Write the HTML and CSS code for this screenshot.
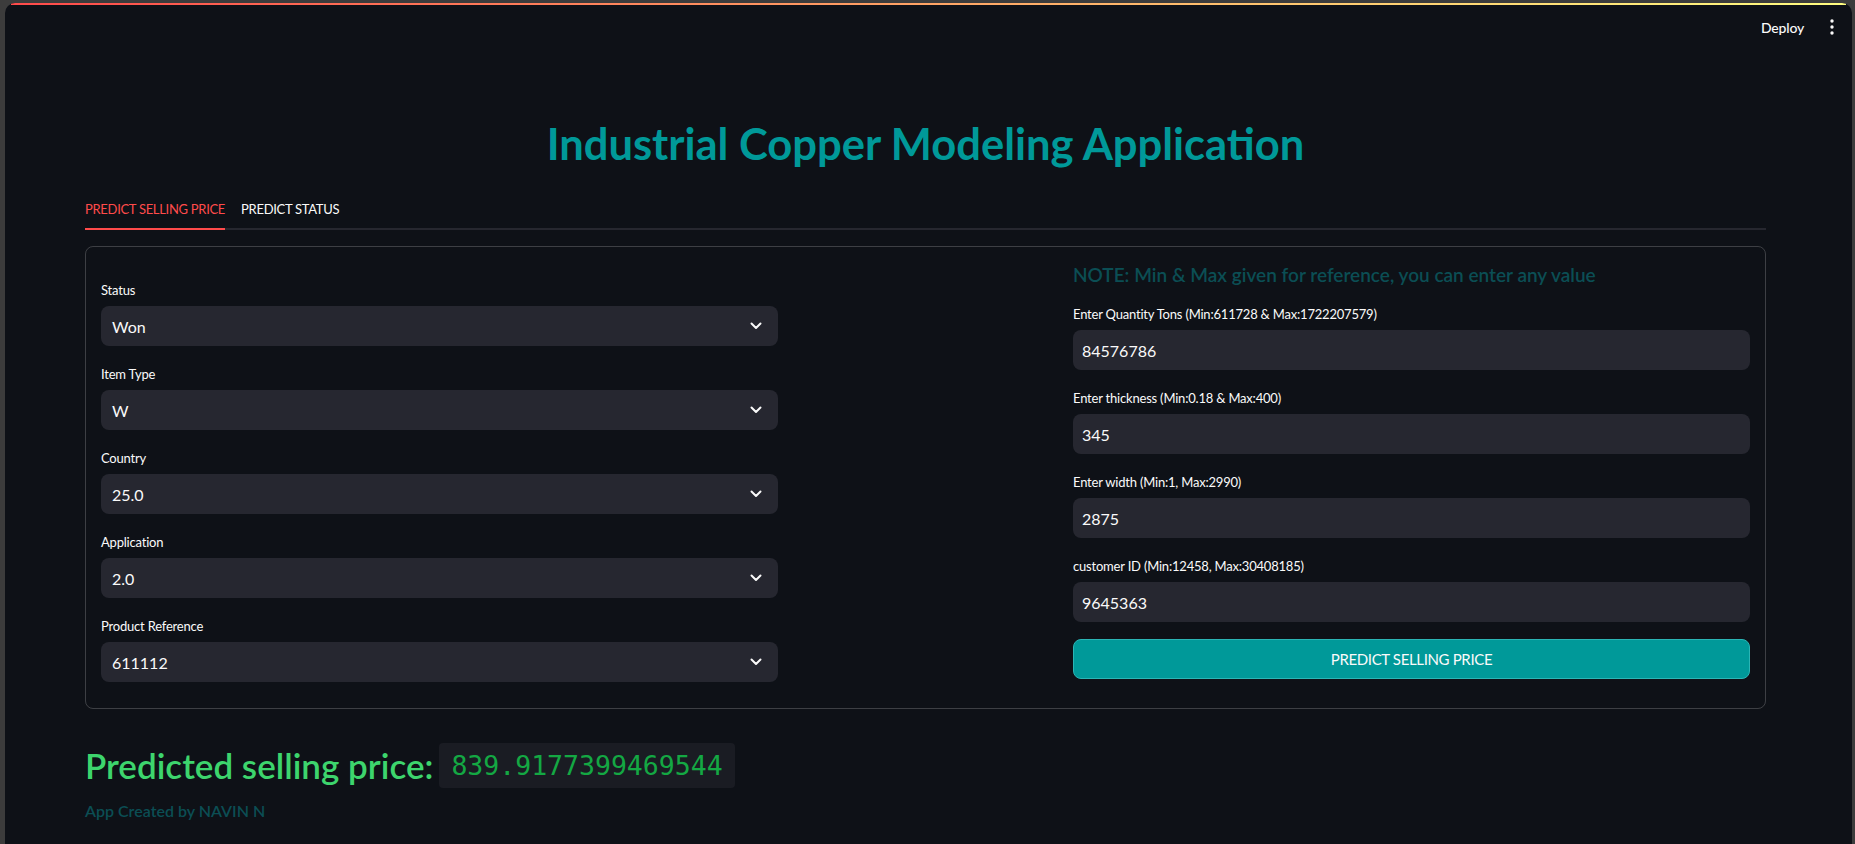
FILE: index.html
```html
<!DOCTYPE html>
<html lang="en">
<head>
<meta charset="utf-8">
<title>Industrial Copper Modeling Application</title>
<link rel="stylesheet" href="styles.css">
</head>
<body>
<div class="window">
  <div class="decoration"></div>
  <header class="topbar">
    <span class="deploy">Deploy</span>
    <span class="menu" aria-label="menu">
      <svg width="4" height="16" viewBox="0 0 4 16"><circle cx="2" cy="2" r="1.7" fill="#fafafa"/><circle cx="2" cy="8" r="1.7" fill="#fafafa"/><circle cx="2" cy="14" r="1.7" fill="#fafafa"/></svg>
    </span>
  </header>
  <main class="main">
    <h1 class="title">Industrial Copper Modeling Application</h1>
    <nav class="tabs">
      <span class="tab active">PREDICT SELLING PRICE</span>
      <span class="tab">PREDICT STATUS</span>
    </nav>
    <section class="form">
      <div class="col col-left">
        <div class="field">
          <div class="label">Status</div>
          <div class="control select"><span>Won</span><svg class="chev" width="12" height="8" viewBox="0 0 12 8"><path d="M1.5 1.5 L6 6 L10.5 1.5" fill="none" stroke="#fafafa" stroke-width="2" stroke-linecap="round" stroke-linejoin="round"/></svg></div>
        </div>
        <div class="field">
          <div class="label">Item Type</div>
          <div class="control select"><span>W</span><svg class="chev" width="12" height="8" viewBox="0 0 12 8"><path d="M1.5 1.5 L6 6 L10.5 1.5" fill="none" stroke="#fafafa" stroke-width="2" stroke-linecap="round" stroke-linejoin="round"/></svg></div>
        </div>
        <div class="field">
          <div class="label">Country</div>
          <div class="control select"><span>25.0</span><svg class="chev" width="12" height="8" viewBox="0 0 12 8"><path d="M1.5 1.5 L6 6 L10.5 1.5" fill="none" stroke="#fafafa" stroke-width="2" stroke-linecap="round" stroke-linejoin="round"/></svg></div>
        </div>
        <div class="field">
          <div class="label">Application</div>
          <div class="control select"><span>2.0</span><svg class="chev" width="12" height="8" viewBox="0 0 12 8"><path d="M1.5 1.5 L6 6 L10.5 1.5" fill="none" stroke="#fafafa" stroke-width="2" stroke-linecap="round" stroke-linejoin="round"/></svg></div>
        </div>
        <div class="field">
          <div class="label">Product Reference</div>
          <div class="control select"><span>611112</span><svg class="chev" width="12" height="8" viewBox="0 0 12 8"><path d="M1.5 1.5 L6 6 L10.5 1.5" fill="none" stroke="#fafafa" stroke-width="2" stroke-linecap="round" stroke-linejoin="round"/></svg></div>
        </div>
      </div>
      <div class="col col-right">
        <h4 class="note">NOTE: Min &amp; Max given for reference, you can enter any value</h4>
        <div class="field">
          <div class="label">Enter Quantity Tons (Min:611728 &amp; Max:1722207579)</div>
          <div class="control input">84576786</div>
        </div>
        <div class="field">
          <div class="label">Enter thickness (Min:0.18 &amp; Max:400)</div>
          <div class="control input">345</div>
        </div>
        <div class="field">
          <div class="label">Enter width (Min:1, Max:2990)</div>
          <div class="control input">2875</div>
        </div>
        <div class="field">
          <div class="label">customer ID (Min:12458, Max:30408185)</div>
          <div class="control input">9645363</div>
        </div>
        <button class="btn">PREDICT SELLING PRICE</button>
      </div>
    </section>
    <div class="result">
      <h2 class="result-title">Predicted selling price:</h2>
      <code class="result-value">839.9177399469544</code>
    </div>
    <p class="footer">App Created by NAVIN N</p>
  </main>
</div>
</body>
</html>
```

FILE: styles.css
```css
* { box-sizing: border-box; }
html, body { margin: 0; padding: 0; }
body {
  background: #3c3c3c;
  font-family: Lato, "Noto Sans", sans-serif;
  color: #fafafa;
  overflow: hidden;
}
.window {
  margin: 3px 3px 0 5px;
  height: 841px;
  background: #0e1117;
  border-radius: 10px 10px 0 0;
  overflow: hidden;
}
.decoration {
  height: 2px;
  margin: 0 6px;
  background: linear-gradient(90deg, #ff4b4b, #fffd80);
}
.topbar {
  height: 44px;
  display: flex;
  align-items: center;
  justify-content: flex-end;
  padding-right: 18px;
  gap: 26px;
}
.deploy { font-size: 14px; font-weight: 500; letter-spacing: -0.2px; }
.menu { display: flex; align-items: center; }
.main {
  padding: 64px 86px 0 80px;
}
.title {
  margin: 0;
  font-size: 43.5px;
  line-height: 60px;
  font-weight: 700;
  color: #009999;
  text-align: center;
}
.tabs {
  margin-top: 26px;
  display: flex;
  gap: 16px;
  border-bottom: 2px solid #26272f;
}
.tab {
  font-size: 13px;
  letter-spacing: -0.3px;
  line-height: 20px;
  padding-bottom: 9px;
  color: #fafafa;
  margin-bottom: -2px;
  border-bottom: 2px solid transparent;
}
.tab.active { color: #ff4b4b; border-bottom-color: #ff4b4b; }
.form {
  margin-top: 16px;
  border: 1px solid rgba(250, 250, 250, 0.2);
  border-radius: 8px;
  padding: 16px 15px 26px;
  display: grid;
  grid-template-columns: 677px 677px;
  justify-content: space-between;
}
.col { display: flex; flex-direction: column; gap: 16px; }
.col-left { padding-top: 15px; }
.field { display: flex; flex-direction: column; }
.label {
  font-size: 13px;
  letter-spacing: -0.2px;
  line-height: 24px;
  height: 24px;
  margin-bottom: 4px;
  color: #fafafa;
}
.control {
  height: 40px;
  background: #262730;
  border-radius: 8px;
  display: flex;
  align-items: center;
  font-size: 16px;
  color: #fafafa;
}
.select { padding: 0 16px 0 11px; justify-content: space-between; }
.input { padding: 0 9px; }
.note {
  margin: 0;
  font-size: 19px;
  line-height: 23px;
  font-weight: 600;
  color: #0b4e54;
}
.btn {
  height: 40px;
  background: #009999;
  border: 1px solid #2bb5b5;
  border-radius: 8px;
  color: #fafafa;
  font-family: inherit;
  font-size: 15px;
  letter-spacing: -0.35px;
  margin-top: 1px;
}
.result {
  margin-top: 34px;
  display: flex;
  align-items: center;
  gap: 6px;
}
.result-title {
  margin: 0;
  font-size: 35px;
  line-height: 45px;
  font-weight: 600;
  color: #3dd56d;
}
.result-value {
  height: 45px;
  display: flex;
  align-items: center;
  padding: 0 12px;
  background: #1a1c23;
  border-radius: 4px;
  font-family: "DejaVu Sans Mono", "Liberation Mono", monospace;
  font-size: 26.5px;
  color: #14a843;
}
.footer {
  margin: 11px 0 0;
  font-size: 16px;
  line-height: 24px;
  font-weight: 600;
  color: #0b4e54;
}
```
